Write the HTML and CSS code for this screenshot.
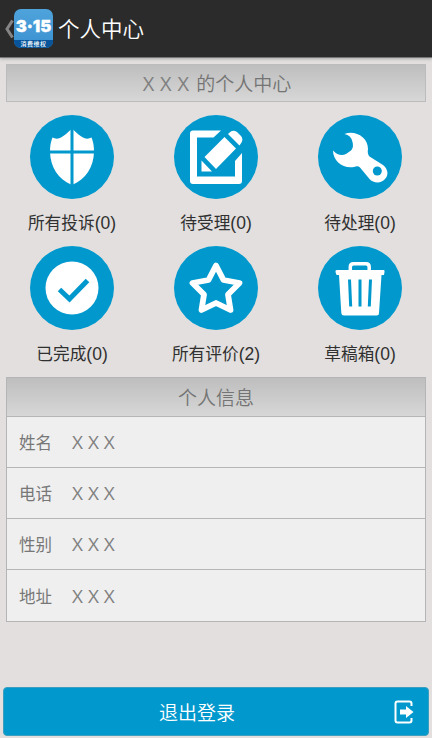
FILE: index.html
```
<!DOCTYPE html>
<html lang="zh-CN">
<head>
<meta charset="utf-8">
<title>个人中心</title>
<link rel="stylesheet" href="styles.css">
</head>
<body>
<header class="bar">
  <svg class="back" viewBox="0 0 10 20"><path d="M8.500 1.500 3 10l5.500 8.500"/></svg>
  <div class="logo"><div class="logo-num">3·15</div><div class="logo-name">消费维权</div></div>
  <h1>个人中心</h1>
</header>
<main>
  <h2 class="heading welcome"><span class="name">X X X</span> 的个人中心</h2>
  <nav class="grid">
    <a class="item"><svg class="icon" viewBox="0 0 84 84"><circle class="disc" cx="42" cy="42" r="42"/><path class="w" d="M42 13.500C37 18.500 33.500 21 30 23Q26 24.500 22.500 22.500Q20 28 20 37C20.500 52 28 64 42 70 56 64 63.500 52 64 37Q64 28 61.500 22.500Q58 24.500 54 23C50.500 21 47 18.500 42 13.500Z"/><path class="b" d="M42 12v60M18 37h48" stroke-width="3"/></svg><span>所有投诉<i>(0)</i></span></a>
    <a class="item"><svg class="icon" viewBox="0 0 84 84"><circle class="disc" cx="42" cy="42" r="42"/><path class="w" d="M19 15.500H47L39.500 22.500H23V61.500H61V46L68 38V66Q68 69 65 69H19Q16 69 16 66V18.500Q16 15.500 19 15.500Z"/><path class="w" d="M27.500 45.500 38 56.500H27.500ZM30.500 42 50.500 22 62 33.500 42 54ZM54 19 56.500 16.800Q59.500 14.500 63 17L67 21Q69.500 24 67.500 27.500L65.500 30.500Z"/></svg><span>待受理<i>(0)</i></span></a>
    <a class="item"><svg class="icon" viewBox="0 0 84 84"><circle class="disc" cx="42" cy="42" r="42"/><path class="w" d="M26.500 19C37 15 50 22 50 34Q49 39 51.500 41.500L65 50C70 54 71 60 67 64 63 69 55 68 51.500 64L42 52.500Q40 50.500 36 52C25 54 15 46 15 35.500 19 40 24 41 28 39L33 35.500Q36 32 34.500 27 33 20 26.500 19Z"/><circle class="disc" cx="59.300" cy="56" r="4.500"/></svg><span>待处理<i>(0)</i></span></a>
    <a class="item"><svg class="icon" viewBox="0 0 84 84"><circle class="disc" cx="42" cy="42" r="42"/><circle class="w" cx="42" cy="42" r="26.500"/><path class="b" d="m29.500 43.500 10 9.500L57.500 34.500" stroke-width="5"/></svg><span>已完成<i>(0)</i></span></a>
    <a class="item"><svg class="icon" viewBox="0 0 84 84"><circle class="disc" cx="42" cy="42" r="42"/><path class="line" stroke-width="5.800" d="M42 19.500 49.500 34 65.500 37 54 48.500 56.500 64 42 57 27.500 64 30 48.500 18.500 37 34.500 34Z"/></svg><span>所有评价<i>(2)</i></span></a>
    <a class="item"><svg class="icon" viewBox="0 0 84 84"><circle class="disc" cx="42" cy="42" r="42"/><path class="line" stroke-width="3.500" d="M32.300 26V21Q32.300 17.700 35.500 17.700H48Q51.200 17.700 51.200 21V26"/><path class="w" d="M19 24H65.500Q67 24 66.500 26L66 29H63.500L61 67Q61 69.500 58.500 69.500H26Q23.500 69.500 23.300 67L21 29H18.500L17.500 26Q17 24 19 24Z"/><path class="b" stroke-width="3" d="m31.500 33.500 1.200 27M42 33.500v27M52.500 33.500l-1.200 27"/></svg><span>草稿箱<i>(0)</i></span></a>
  </nav>
  <section class="info">
    <h2 class="heading">个人信息</h2>
    <div class="row"><span class="label">姓名</span><span class="name">X X X</span></div>
    <div class="row"><span class="label">电话</span><span class="name">X X X</span></div>
    <div class="row"><span class="label">性别</span><span class="name">X X X</span></div>
    <div class="row"><span class="label">地址</span><span class="name">X X X</span></div>
  </section>
</main>
<button class="logout"><span>退出登录</span>
  <svg class="exit" viewBox="0 0 20 24"><path class="line" stroke-width="2" d="M17.500 6V3.500Q17.500 1.500 15.500 1.500H3.500Q1.500 1.500 1.500 3.500V20.500Q1.500 22.500 3.500 22.500H15.500Q17.500 22.500 17.500 20.500V18"/><path class="w" d="M6 9.500H12V6L19.500 12 12 18V14.500H6Z"/></svg>
</button>
</body>
</html>
```
FILE: styles.css
```
* { box-sizing: border-box; }
body {
  margin: 0;
  height: 738px;
  display: flex;
  flex-direction: column;
  background: #e2dfde;
  font-family: "Noto Sans CJK SC", sans-serif;
  color: #303030;
  overflow: hidden;
}
h1, h2 { margin: 0; font-weight: 350; }
.bar {
  height: 58px;
  display: flex;
  align-items: center;
  background: #2b2b2b;
  border-bottom: 1px solid #777;
  box-shadow: 0 1px 3px #aaa;
  padding-left: 4px;
}
.back { width: 10px; height: 20px; fill: none; stroke: #858585; stroke-width: 3; }
.logo {
  width: 39px;
  height: 39px;
  border-radius: 7px;
  overflow: hidden;
  display: flex;
  flex-direction: column;
  background: linear-gradient(#4fa3dc, #3a90d0);
  color: #fff;
  text-align: center;
}
.logo-num {
  height: 31px;
  font: 900 16.5px/34px Inter, sans-serif;
  white-space: nowrap;
  -webkit-text-stroke: 0.3px #fff;
}
.logo-name { height: 8px; background: #07549a; font-size: 6px; line-height: 7px; font-weight: 500; letter-spacing: .5px; }
.bar h1 { margin-left: 5px; color: #fff; font-size: 21.5px; line-height: 30px; margin-top: -2px; }
main { padding: 6px 6px 0; flex: 1; }
.heading {
  height: 39px;
  font-size: 19px;
  line-height: 38px;
  text-align: center;
  color: #747474;
  background: linear-gradient(#bebebe, #d6d7d6);
  border-bottom: 1px solid #b5b5b5;
}
.welcome { height: 38px; line-height: 36px; border: 1px solid #bcbcbc; padding-left: 2px; }
.name { font-family: "Open Sans", sans-serif; font-weight: 400; color: #808080; }
.welcome .name { font-size: 20px; margin-right: 3px; word-spacing: .6px; }
.grid {
  margin: 13px -6px 0;
  display: grid;
  grid-template-columns: repeat(3, 144px);
  grid-auto-rows: 131px;
}
.item { display: flex; flex-direction: column; align-items: center; font-size: 16.7px; line-height: 24px; }
.item span { margin-top: 11px; }
.item i { font: 400 17.5px/20px "Liberation Sans", sans-serif; }
.icon { width: 84px; height: 84px; }
.disc { fill: #0199cd; }
.w { fill: #fff; }
.b { fill: none; stroke: #0199cd; }
.line { fill: none; stroke: #fff; stroke-linejoin: round; }
.info { border: 1px solid #b5b5b5; }
.row {
  height: 51px;
  display: flex;
  align-items: center;
  padding-left: 12px;
  background: #efefef;
  border-bottom: 1px solid #b5b5b5;
  color: #777;
}
.row:last-child { border-bottom: 0; }
.label { width: 53px; font-size: 16.5px; }
.row .name { font-size: 19px; }
.logout {
  position: relative;
  height: 49px;
  margin: 0 3px 2px;
  padding: 0 62px 0 24px;
  border: 1px solid #3b9fc0;
  border-radius: 4px;
  background: #0199cd;
  color: #fff;
  font: 350 19px/46px "Noto Sans CJK SC", sans-serif;
}
.exit { position: absolute; right: 14px; top: 12px; width: 20px; height: 24px; }
```
